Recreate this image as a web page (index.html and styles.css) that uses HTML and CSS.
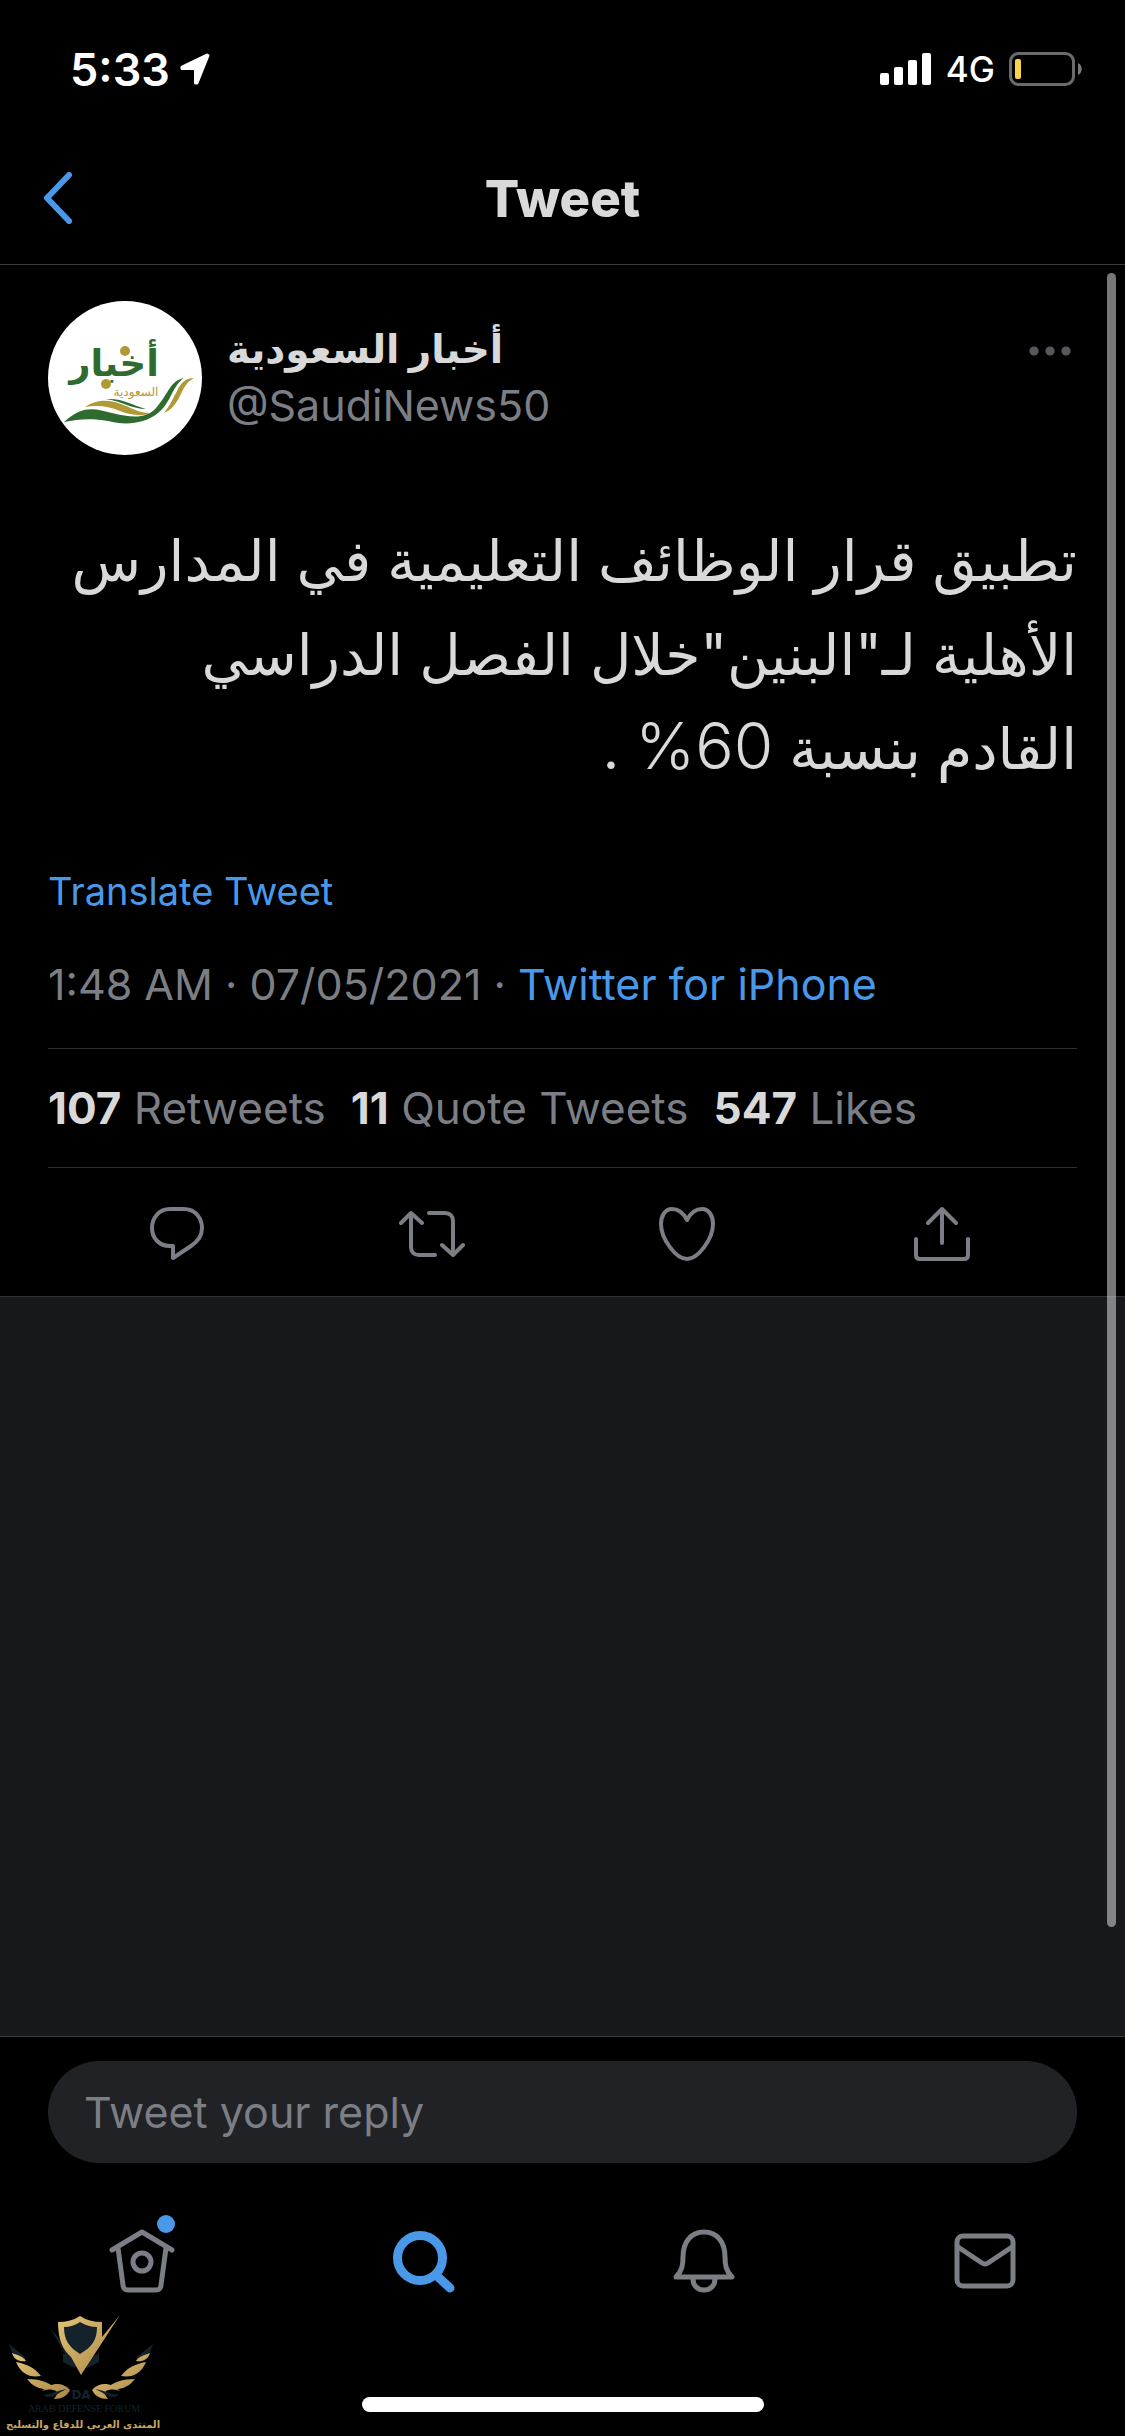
FILE: index.html
```html
<!DOCTYPE html>
<html lang="en">
<head>
<meta charset="utf-8">
<meta name="viewport" content="width=device-width, initial-scale=1">
<title>Tweet</title>
<link rel="stylesheet" href="styles.css">
</head>
<body>
<div class="screen">
  <div class="status">
    <div class="status-side">
      <span class="clock">5:33</span>
      <svg width="30" height="32" viewBox="0 0 30 32"><path d="M27 2 2 14v1.500h13.500V30h1.500L28 2.500z" fill="#fff" stroke="#fff" stroke-width="3" stroke-linejoin="round"/></svg>
    </div>
    <div class="status-side status-right">
      <svg width="52" height="32" viewBox="0 0 52 32" fill="#fff"><rect y="20" width="9" height="12" rx="2"/><rect x="14" y="14" width="9" height="18" rx="2"/><rect x="28" y="7" width="9" height="25" rx="2"/><rect x="42" width="9" height="32" rx="2"/></svg>
      <span class="network">4G</span>
      <svg width="74" height="34" viewBox="0 0 74 34"><rect x="1.500" y="1.500" width="63" height="31" rx="8" fill="none" stroke="#6b6b6b" stroke-width="3"/><rect x="6" y="7" width="6" height="20" rx="2" fill="#f8d447"/><path d="M69 11c5 2 5 10 0 12z" fill="#7a7a7a"/></svg>
    </div>
  </div>
  <header class="header">
    <button class="back" aria-label="Back"><svg width="28" height="52" viewBox="0 0 28 52"><path d="M25 3 3 26l22 23" fill="none" stroke="#4a99e9" stroke-width="6" stroke-linecap="round" stroke-linejoin="round"/></svg></button>
    <h1 class="title">Tweet</h1>
  </header>
  <main class="feed">
    <article class="post">
      <div class="author">
        <svg class="avatar" viewBox="0 0 154 154" aria-hidden="true">
          <circle cx="77" cy="77" r="77" fill="#fff"/>
          <text class="logo-main" x="66" y="75" text-anchor="middle" direction="rtl">أخبار</text>
          <circle cx="77" cy="50" r="5" fill="#b09a35"/><circle cx="58" cy="83" r="5" fill="#b09a35"/>
          <text class="logo-sub" x="88" y="95" text-anchor="middle" direction="rtl">السعودية</text>
          <path d="M16 121C35 103 48 108 64 112c20 5 34 6 44-5 13-15 14-27 28-30-12 8-13 25-26 35-15 12-34 12-50 8-16-3-30-2-44 1z" fill="#2f6b2f"/>
          <path d="M37 106c18-12 34-4 48 2 7 3 12 4 17 4-7 4-20 2-30-2-12-5-22-6-35-4zM116 112c4-5 9-14 13-22 4-9 9-13 17-13-9 5-11 12-15 20-4 7-9 13-15 15z" fill="#b09a35"/>
          <path d="M58 98c17-1 26 6 40 10-14 0-22-7-40-10z" fill="#2f6b2f"/>
        </svg>
        <div class="names">
          <a class="name" href="#" dir="rtl" lang="ar">أخبار السعودية</a>
          <span class="handle">@SaudiNews50</span>
        </div>
        <button class="more" aria-label="More"><svg width="42" height="10" viewBox="0 0 42 10" fill="#55585c"><circle cx="5" cy="5" r="4.600"/><circle cx="21" cy="5" r="4.600"/><circle cx="37" cy="5" r="4.600"/></svg></button>
      </div>
      <p class="text" dir="rtl" lang="ar">تطبيق قرار الوظائف التعليمية في المدارس<br>الأهلية لـ"البنين"خلال الفصل الدراسي<br>القادم بنسبة <span class="figure">60%</span> .</p>
      <a class="translate" href="#">Translate Tweet</a>
      <p class="meta">1:48 AM · 07/05/2021 · <a href="#">Twitter for iPhone</a></p>
      <div class="stats">
        <a href="#"><b>107</b> Retweets</a>
        <a href="#"><b>11</b> Quote Tweets</a>
        <a href="#"><b>547</b> Likes</a>
      </div>
      <div class="actions">
        <button aria-label="Reply"><svg class="line" width="56" height="56" viewBox="0 0 56 56"><path d="M21 3h14c11 0 18 9 18 19 0 8-5 14-11 18L24 52V40h-3C10 40 3 32 3 22S10 3 21 3z"/></svg></button>
        <button aria-label="Retweet"><svg class="line" width="66" height="48" viewBox="0 0 66 48"><path d="M2 13 12 3l11 10M12 3v34c0 5 3 8 8 8h16M64 35 54 45 43 35M54 45V11c0-5-3-8-8-8H30"/></svg></button>
        <button aria-label="Like"><svg class="line" width="58" height="54" viewBox="0 0 58 54"><path d="M29 13C24 3 17 2 14 2 7 2 3 9 3 17c0 15 15 35 26 35s26-20 26-35c0-8-4-15-11-15-3 0-10 1-15 11z"/></svg></button>
        <button aria-label="Share"><svg class="line" width="56" height="56" viewBox="0 0 56 56"><path d="M28 37V3M14 17 28 3l14 14M2 33v16c0 2 1 4 4 4h44c3 0 4-2 4-4V33"/></svg></button>
      </div>
    </article>
    <div class="scroll-thumb"></div>
  </main>
  <footer class="footer">
    <input class="reply" type="text" placeholder="Tweet your reply" aria-label="Tweet your reply">
    <nav class="tabs">
      <a href="#" aria-label="Home"><span class="tab-icon"><svg class="line" width="66" height="64" viewBox="0 0 66 64"><path d="M3 21 33 3l30 18M9 19l5 37c0 3 2 5 5 5h28c3 0 5-2 5-5l5-37"/><circle cx="33" cy="33" r="9"/></svg><i class="badge"></i></span></a>
      <a href="#" aria-label="Search"><svg width="64" height="64" viewBox="0 0 64 64" fill="none" stroke="#4a99e9" stroke-linecap="round"><circle cx="29" cy="29" r="22.500" stroke-width="9"/><path d="M45 46 59 59" stroke-width="9"/></svg></a>
      <a href="#" aria-label="Notifications"><svg class="line" width="62" height="64" viewBox="0 0 62 64"><path d="M3 48c6-6 7-12 7-20C10 13 18 3 31 3s21 10 21 25c0 8 1 14 7 20zM20 50c0 7 5 11 11 11s11-4 11-11"/></svg></a>
      <a href="#" aria-label="Messages"><svg class="line" width="62" height="56" viewBox="0 0 62 56"><rect x="3" y="3" width="56" height="50" rx="6"/><path d="m4 14 24 16q3 2 6 0L58 14"/></svg></a>
    </nav>
    <div class="home-bar"></div>
  </footer>
  <svg class="watermark" viewBox="0 0 180 136" aria-hidden="true">
    <defs><linearGradient id="gold" x2="1" y2="1"><stop offset="0" stop-color="#e2c377"/><stop offset="1" stop-color="#a98745"/></linearGradient></defs>
    <g fill="#14222b"><path d="M50 28 78 60 70 62zM63 53l14 8-2 7-12-6zM99 53l-14 8 2 7 12-6zM9 44l16 13v5L13 55zM153 44l-16 13v5l12-7z"/></g>
    <g fill="url(#gold)">
      <path d="M12 53c5 2 11 3 14 8-6 1-12-1-14-8zM16 62c11 2 19 6 25 14-11 2-20-2-25-14zM27 79c13 0 20 3 29 9-13 3-22 0-29-9zM42 91c8-8 20-10 28-1-3 6-8 9-16 9 3-4 4-6 2-8-4-2-8-2-14 0z"/>
      <path d="M150 53c-5 2-11 3-14 8 6 1 12-1 14-8zM146 62c-11 2-19 6-25 14 11 2 20-2 25-14zM135 79c-13 0-20 3-29 9 13 3 22 0 29-9zM120 91c-8-8-20-10-28-1 3 6 8 9 16 9-3-4-4-6-2-8 4-2 8-2 14 0z"/>
      <path d="M58 22q13 0 22-6 9 6 22 6v15l18-22L81 75 71 57C62 49 58 38 58 22z"/>
    </g>
    <path d="M64 27q9 0 16-5 8 5 17 5c0 13-5 20-17 27-11-7-16-14-16-27z" fill="#14222b"/>
    <path d="M43 94c8 2 11-3 24-5-8 3-11 8-20 8zM119 94c-8 2-11-3-24-5 8 3 11 8 20 8z" fill="#14222b"/>
    <text class="mark-da" x="81" y="99" text-anchor="middle">DA</text>
    <text class="mark-en" x="84" y="112" text-anchor="middle">ARAB DEFENSE FORUM</text>
    <text class="mark-ar" x="83" y="128" text-anchor="middle" direction="rtl">المنتدى العربي للدفاع والتسليح</text>
  </svg>
</div>
</body>
</html>
```
FILE: styles.css
```css
* { box-sizing: border-box; }

body {
  margin: 0;
  background: #000;
  color: #d9d9d9;
  font-family: Inter, "DejaVu Sans", sans-serif;
  font-size: 43px;
}

h1, p { margin: 0; }
a { color: inherit; text-decoration: none; }
button { margin: 0; padding: 0; border: 0; background: none; color: inherit; }
svg { display: block; flex: none; }

.screen {
  position: relative;
  display: flex;
  flex-direction: column;
  min-height: 100vh;
}

.status {
  display: flex;
  justify-content: space-between;
  padding: 46px 42px 40px 70px;
  color: #fff;
}
.status-side { display: flex; align-items: center; gap: 10px; height: 46px; }
.status-right { gap: 14px; }
.clock { font-weight: 600; font-size: 45px; }
.network { font-weight: 500; font-size: 35px; }

.header {
  display: grid;
  grid-template-columns: 1fr auto 1fr;
  align-items: center;
  height: 133px;
  padding: 0 44px;
  border-bottom: 1px solid #3a3d42;
}
.back { justify-self: start; }
.title { font-size: 51px; font-weight: 800; }

.feed {
  position: relative;
  flex: 1;
  background: #16181c;
}
.scroll-thumb {
  position: absolute;
  top: 8px;
  right: 9px;
  bottom: 109px;
  width: 9px;
  border-radius: 5px;
  background: rgba(255, 255, 255, 0.47);
}

.post {
  padding: 36px 48px 0;
  background: #000;
  border-bottom: 1px solid #2f3336;
}
.author { display: flex; align-items: flex-start; gap: 25px; }
.avatar { width: 154px; height: 154px; }
.names { display: flex; flex-direction: column; align-items: flex-start; flex: 1; padding-top: 20px; }
.name { font-size: 39px; font-weight: 700; line-height: 56px; }
.handle { color: #7b7f85; line-height: 56px; }
.more { padding: 45px 6px; }

.text {
  margin-top: 59px;
  font-size: 57px;
  line-height: 94px;
}
.figure { font-size: 64px; font-weight: 300; line-height: 1; }

.translate { display: block; margin-top: 72px; color: #4a99e9; font-size: 38px; line-height: 46px; }
.meta { padding: 42px 0 36px; color: #7b7f85; line-height: 56px; }
.meta a { color: #4a99e9; }

.stats {
  display: flex;
  gap: 25px;
  padding: 31px 0;
  border: solid #2b2d30;
  border-width: 1px 0;
  color: #7b7f85;
  font-size: 44px;
  line-height: 56px;
}
.stats b { color: #d9d9d9; font-weight: 700; }

.actions {
  display: grid;
  grid-template-columns: repeat(4, 1fr);
  align-items: center;
  height: 128px;
  padding: 4px 8px 0 1px;
}
.actions button { display: flex; justify-content: center; }

.line {
  fill: none;
  stroke: #7b7f85;
  stroke-width: 4;
  stroke-linecap: round;
  stroke-linejoin: round;
}
.tabs .line { stroke-width: 5; }

.footer { padding: 24px 48px; border-top: 1px solid #3a3d42; }
.reply {
  display: block;
  width: 100%;
  height: 102px;
  padding: 0 36px;
  border: 0;
  border-radius: 51px;
  background: #212226;
  color: #d9d9d9;
  font: inherit;
}
.reply::placeholder { color: #7b7f85; opacity: 1; }

.tabs {
  display: grid;
  grid-template-columns: repeat(4, 1fr);
  align-items: center;
  margin: 66px -48px 0;
  padding-left: 2px;
}
.tabs a { display: flex; justify-content: center; }
.tab-icon { position: relative; }
.badge {
  position: absolute;
  top: -14px;
  right: 0;
  width: 18px;
  height: 18px;
  border-radius: 50%;
  background: #4a99e9;
}
.home-bar {
  width: 402px;
  max-width: 60%;
  height: 15px;
  margin: 104px auto 0;
  border-radius: 8px;
  background: #fff;
}

.logo-main { fill: #2f6b2f; font: 700 37px "DejaVu Sans", sans-serif; }
.logo-sub { fill: #b09a35; font: 12px "DejaVu Sans", sans-serif; }

.watermark { position: absolute; left: 0; bottom: 0; width: 180px; height: 136px; }
.mark-da { fill: #14222b; font: 700 12px "DejaVu Sans", sans-serif; }
.mark-en { fill: #14222b; font: 10px "Liberation Serif", serif; }
.mark-ar { fill: #c9a75e; font: 700 10px "DejaVu Sans", sans-serif; }
```
